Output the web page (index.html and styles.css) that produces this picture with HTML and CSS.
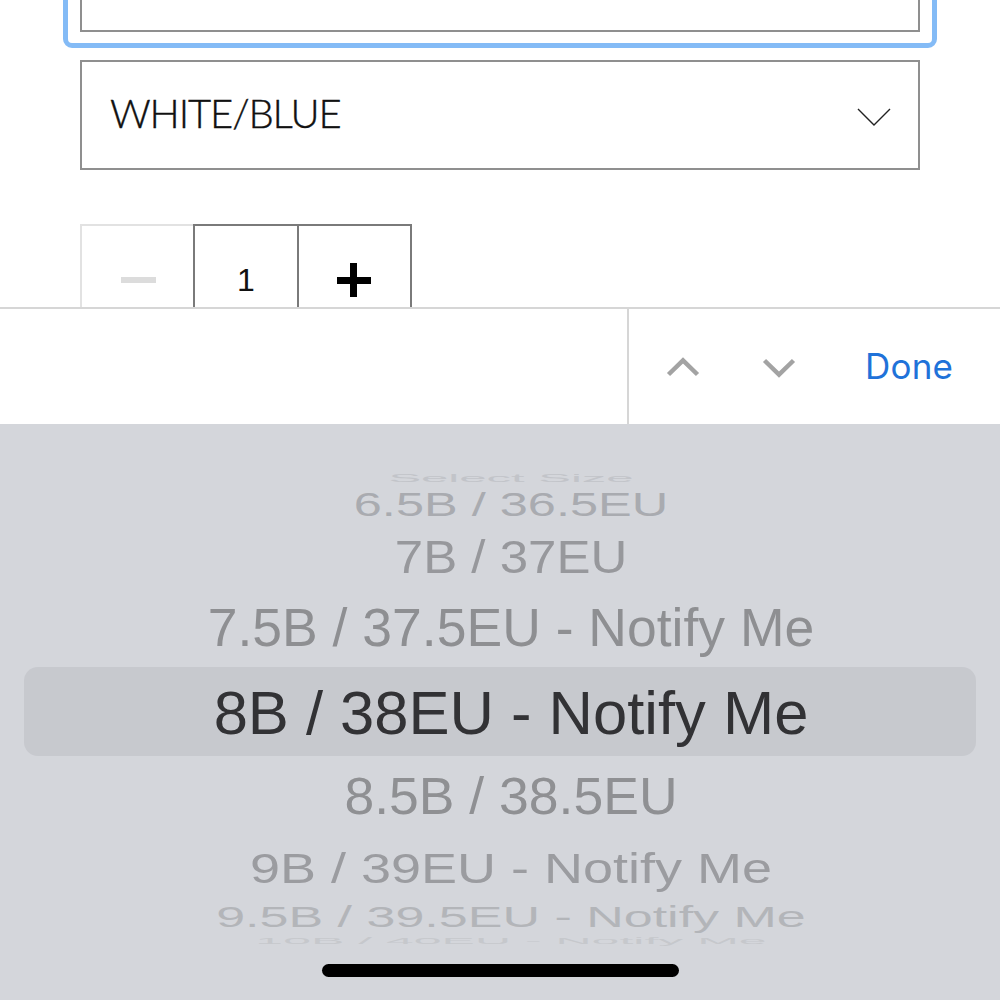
FILE: index.html
```html
<!DOCTYPE html>
<html lang="en">
<head>
<meta charset="utf-8">
<title>Size picker</title>
<link rel="stylesheet" href="styles.css">
</head>
<body>
<div class="page">
  <div class="form">
    <div class="ring"><div class="ring-inner"></div></div>
    <div class="select">
      <span class="select-label">WHITE/BLUE</span>
      <svg class="select-chev" width="34" height="18" viewBox="0 0 34 18"><path d="M1 1 L17 17 L33 1" fill="none" stroke="#222" stroke-width="1.4"/></svg>
    </div>
    <div class="stepper">
      <div class="step step-minus"><span class="minus"></span></div>
      <div class="step step-num">1</div>
      <div class="step step-plus"><span class="plus"></span></div>
    </div>
  </div>
  <div class="bar">
    <div class="bar-left"></div>
    <div class="bar-right">
      <svg class="nav-chev" width="34" height="20" viewBox="0 0 34 20"><path d="M2.5 17.5 L17 3.5 L31.5 17.5" fill="none" stroke="#a3a3a3" stroke-width="4.5"/></svg>
      <svg class="nav-chev" width="34" height="20" viewBox="0 0 34 20"><path d="M2.5 2.5 L17 16.5 L31.5 2.5" fill="none" stroke="#a3a3a3" stroke-width="4.5"/></svg>
      <span class="done">Done</span>
    </div>
  </div>
  <div class="picker">
    <div class="row r-select"><span>Select Size</span></div>
    <div class="row r-65"><span>6.5B / 36.5EU</span></div>
    <div class="row r-7"><span>7B / 37EU</span></div>
    <div class="row r-75"><span>7.5B / 37.5EU - Notify Me</span></div>
    <div class="row r-8"><span>8B / 38EU - Notify Me</span></div>
    <div class="row r-85"><span>8.5B / 38.5EU</span></div>
    <div class="row r-9"><span>9B / 39EU - Notify Me</span></div>
    <div class="row r-95"><span>9.5B / 39.5EU - Notify Me</span></div>
    <div class="row r-10"><span>10B / 40EU - Notify Me</span></div>
    <div class="home"></div>
  </div>
</div>
</body>
</html>
```
FILE: styles.css
```css
* { box-sizing: border-box; }
html, body { margin: 0; padding: 0; }
body { width: 1000px; height: 1000px; overflow: hidden; background: #fff; font-family: "Liberation Sans", Arial, sans-serif; }
.page { display: flex; flex-direction: column; height: 1000px; }

.form { height: 307px; overflow: hidden; flex: none; }
.ring {
  margin: -50px 63px 0;
  border: 5px solid #84bbf6;
  border-radius: 9px;
  padding: 0 12px 11px;
}
.ring-inner { height: 77px; border: 2px solid #8f8f8f; }

.select {
  margin: 12px 80px 0;
  height: 110px;
  border: 2px solid #8f8f8f;
  display: flex;
  align-items: center;
  justify-content: space-between;
  padding: 0 27px 0 28px;
}
.select-label {
  font-family: Lato, sans-serif;
  font-weight: 300;
  font-size: 40px;
  letter-spacing: -1.1px;
  color: #111;
  margin-top: -4px;
  -webkit-text-stroke: 0.4px #111;
}
.select-chev { margin-top: 4px; }

.stepper { display: flex; margin: 54px 0 0 80px; }
.step { height: 112px; display: flex; align-items: center; justify-content: center; }
.step-minus { width: 113px; border: 2px solid #e2e2e2; border-right: none; }
.step-num { width: 106px; border: 2px solid #7a7a7a; font-size: 32px; color: #111; padding-left: 0; }
.step-plus { width: 113px; border: 2px solid #7a7a7a; border-left: none; }
.minus { width: 35px; height: 6px; background: #dcdcdc; margin-left: 2px; }
.plus { position: relative; width: 34px; height: 34px; display: block; margin-left: -2px; }
.plus::before, .plus::after { content: ""; position: absolute; background: #000; }
.plus::before { left: 0; top: 13.5px; width: 34px; height: 7px; }
.plus::after { left: 13.5px; top: 0; width: 7px; height: 34px; }

.bar { height: 117px; flex: none; display: flex; background: #fff; border-top: 2px solid #d6d6d6; }
.bar-left { width: 629px; border-right: 2px solid #d6d6d6; }
.bar-right { flex: 1; display: flex; align-items: center; padding: 0 0 0 37px; }
.nav-chev { margin-right: 62px; }
.nav-chev + .nav-chev { margin-right: 69px; margin-top: 2px; }
.done { font-family: Inter, "Liberation Sans", sans-serif; font-size: 35px; letter-spacing: 0.2px; color: #1f72d9; margin-top: -1px; }

.picker { flex: 1; background: #d4d6db; padding-top: 41px; display: flex; flex-direction: column; }
.row { display: flex; align-items: center; justify-content: center; flex: none; line-height: 1; white-space: nowrap; padding-left: 22px; }
.row span { display: inline-block; }
.r-select { height: 26px; font-size: 49px; color: #c2c4c9; }
.r-select span { transform: scaleY(0.22); }
.r-65 { height: 28px; font-size: 50.5px; color: #a9abb0; }
.r-65 span { transform: scaleY(0.66); }
.r-7 { height: 76px; font-size: 51px; color: #97989c; }
.r-7 span { transform: scaleY(0.9); }
.r-75 { height: 66px; font-size: 53.5px; color: #8e8f92; margin-bottom: 6px; }
.r-8 {
  height: 89px; font-size: 61.5px; color: #323235;
  background: #c7c9ce; border-radius: 14px;
  margin: 0 24px;
}
.r-8 span { margin-top: 2px; }
.r-85 { height: 82px; font-size: 53.5px; color: #8f9093; }
.r-85 span { transform: scaleY(0.97); }
.r-9 { height: 60px; font-size: 54px; color: #9b9ca0; }
.r-9 span { transform: scaleY(0.8); }
.r-95 { height: 38px; font-size: 52px; color: #b3b5b9; }
.r-95 span { transform: scaleY(0.57); }
.r-10 { height: 10px; font-size: 50px; color: #c6c8cc; }
.r-10 span { transform: scaleY(0.17); }
.home { width: 357px; height: 13px; border-radius: 7px; background: #000; margin: 18px auto 0; flex: none; }
```
